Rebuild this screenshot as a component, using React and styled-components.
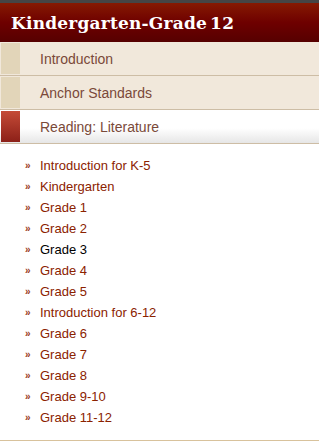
import styled, { createGlobalStyle } from "styled-components";

const GlobalStyle = createGlobalStyle`
  html, body {
    margin: 0;
    padding: 0;
    background: #fff;
  }
  body {
    font-family: "Liberation Sans", Arial, sans-serif;
  }
`;

const tabs = [
  { label: "Introduction" },
  { label: "Anchor Standards" },
  { label: "Reading: Literature", active: true },
];

const links = [
  "Introduction for K-5",
  "Kindergarten",
  "Grade 1",
  "Grade 2",
  "Grade 3",
  "Grade 4",
  "Grade 5",
  "Introduction for 6-12",
  "Grade 6",
  "Grade 7",
  "Grade 8",
  "Grade 9-10",
  "Grade 11-12",
];

function App() {
  return (
    <>
      <GlobalStyle />
      <Sidebar>
        <Header>Kindergarten-Grade 12</Header>
        <Tabs>
          {tabs.map((t) => (
            <Tab key={t.label} $active={t.active}>
              <Swatch $active={t.active} />
              <TabLabel>{t.label}</TabLabel>
            </Tab>
          ))}
        </Tabs>
        <LinkList>
          {links.map((l) => (
            <LinkItem key={l} $current={l === "Grade 3"}>
              <Marker>»</Marker>
              {l}
            </LinkItem>
          ))}
        </LinkList>
      </Sidebar>
    </>
  );
}

const Sidebar = styled.div`
  width: 319px;
  height: 441px;
  box-sizing: border-box;
  border-top: 3px solid #454545;
  border-bottom: 1px solid #d8c29c;
  display: flex;
  flex-direction: column;
  overflow: hidden;
`;

const Header = styled.h1`
  margin: 0;
  height: 39px;
  padding: 0 11px;
  display: flex;
  align-items: center;
  background: linear-gradient(#861a02, #6e0000 50%, #560000);
  color: #fff;
  font-family: "DejaVu Serif", Georgia, serif;
  font-weight: 700;
  font-size: 17px;
  letter-spacing: 0.2px;
  word-spacing: -3px;
`;

const Tabs = styled.div`
  display: flex;
  flex-direction: column;
`;

const Tab = styled.div`
  display: flex;
  align-items: stretch;
  height: 34px;
  box-sizing: border-box;
  border-bottom: 1px solid #cdbda5;
  background: ${(p) =>
    p.$active
      ? "linear-gradient(#fff, #fff 55%, #e6e6e6)"
      : "#f1e8db"};
`;

const Swatch = styled.span`
  width: 19px;
  margin: 1px 0 1px 1px;
  background: ${(p) =>
    p.$active ? "linear-gradient(#c54b37, #8c2018)" : "#e2d5b9"};
`;

const TabLabel = styled.span`
  display: flex;
  align-items: center;
  padding-left: 20px;
  font-size: 14px;
  color: #7a4939;
`;

const LinkList = styled.ul`
  list-style: none;
  margin: 0;
  padding: 11px 0 0 25px;
`;

const LinkItem = styled.li`
  height: 21px;
  display: flex;
  align-items: center;
  font-size: 13px;
  color: ${(p) => (p.$current ? "#000" : "#8b2200")};
`;

const Marker = styled.span`
  width: 15px;
  font-size: 10px;
  font-weight: 700;
  color: #9a3a1a;
`;

export default App;
